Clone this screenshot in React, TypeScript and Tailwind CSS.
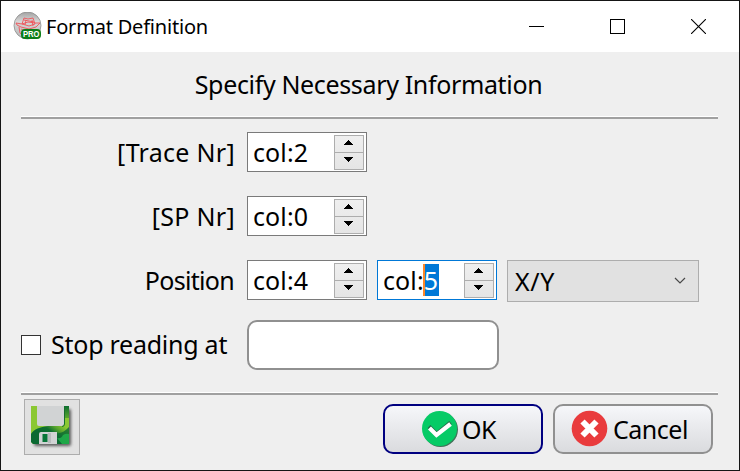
import React from "react";

function Arrow({ up }: { up?: boolean }) {
  return (
    <svg width="9" height="5" viewBox="0 0 9 5" shapeRendering="crispEdges">
      <path d={up ? "M4 0h1v1h1v1h1v1h1v1h1v1H0V4h1V3h1V2h1V1h1z" : "M0 0h9v1H8v1H7v1H6v1H5v1H4V4H3V3H2V2H1V1H0z"} fill="#000" />
    </svg>
  );
}

function SpinBox({ value, focused }: { value: string; focused?: boolean }) {
  return (
    <div className={`flex h-10 w-[120px] items-center border bg-white pr-0.5 pl-[5px] ${focused ? "border-[#0078d7]" : "border-[#7a7a7a]"}`}>
      <div className="flex h-8 flex-1 items-center leading-8">
        <span className="tracking-[0.1px]">col:</span>
        {focused ? (
          <span className="-ml-px h-8 w-4 border-l-2 border-[#ff8728] bg-[#0078d7] text-white"><span className="-ml-px">{value}</span></span>
        ) : (
          <span>{value}</span>
        )}
      </div>
      <div className="flex h-[35px] w-[30px] flex-col border border-[#adadad] bg-gradient-to-b from-[#efefef] to-[#e5e5e5]">
        <div className="flex h-[17px] items-center justify-center border-b border-[#adadad] pr-px pb-0.5"><Arrow up /></div>
        <div className="flex h-4 items-center justify-center pr-px pb-[3px]"><Arrow /></div>
      </div>
    </div>
  );
}

function AppIcon() {
  return (
    <svg width="30" height="30" viewBox="0 0 30 30">
      <defs>
        <linearGradient id="ball" x1="0" y1="0" x2="0" y2="1">
          <stop offset="0" stopColor="#a2a2a2" />
          <stop offset=".35" stopColor="#d6d6d6" />
          <stop offset="1" stopColor="#b9b9b9" />
        </linearGradient>
      </defs>
      <circle cx="14.5" cy="13.5" r="13.500" fill="url(#ball)" stroke="#8d8d8d" strokeWidth=".8" />
      <path d="M9 12l2-6 4 1 5-1 2 6M3 11l6 1 6-2 7 1 5 0-4 4-7 2-8-2-4-2zM9 12l7 2 6-2M11 8l10 2M6 15l1 6 3 3M8 17l4 2 5-1M13 8l-1 5M19 8l1 6" fill="none" stroke="#ee5459" strokeWidth=".9" />
      <rect x="8" y="17" width="20" height="10" rx="4" fill="#0c7e18" />
      <text x="10" y="25.200" textLength="16.500" lengthAdjust="spacingAndGlyphs" fontFamily="Liberation Sans, sans-serif" fontSize="8.500" fontWeight="700" fill="#fff">PRO</text>
    </svg>
  );
}

function SaveIcon() {
  return (
    <svg width="44" height="44" viewBox="0 0 44 44">
      <defs>
        <linearGradient id="edge" x1="0" y1="0" x2="0" y2="1">
          <stop offset="0" stopColor="#0d6f32" />
          <stop offset=".35" stopColor="#4b9c2d" />
          <stop offset=".65" stopColor="#7fc030" />
          <stop offset="1" stopColor="#15803a" />
        </linearGradient>
        <linearGradient id="sweep" gradientUnits="userSpaceOnUse" x1="18" y1="34" x2="30" y2="18">
          <stop offset="0" stopColor="#0b6a33" />
          <stop offset=".4" stopColor="#0f6f30" />
          <stop offset=".7" stopColor="#58a52e" />
          <stop offset="1" stopColor="#8bc832" />
        </linearGradient>
        <filter id="soft" x="-20%" y="-20%" width="150%" height="150%">
          <feGaussianBlur stdDeviation="1.500" />
        </filter>
      </defs>
      <rect x="4" y="4" width="37" height="37" rx="2" fill="#444" opacity=".85" filter="url(#soft)" />
      <path d="M1 1h38v38H3l-2-2z" fill="#8bc832" />
      <path d="M34 1h5v28h-5z" fill="url(#edge)" />
      <path d="M1 29c3-5 9-7 17-8 8 0 14-3 17-8h4v26H3l-2-2z" fill="url(#sweep)" />
      <path d="M26 28c5 1 9-2 13-6v17H26z" fill="#0b6a33" opacity=".8" />
      <path d="M33 30q3-2 6-1v10h-7l-5-6q4 1 6-3z" fill="#22b14c" opacity=".85" />
      <path d="M7 1h27v18q0 2-2 2H9q-2 0-2-2z" fill="#d1d3d4" />
      <path d="M34.500 1v18q0 2.500-2.500 2.500" fill="none" stroke="#176f2c" />
      <path d="M11 27h16v12H9V29q0-2 2-2z" fill="#d1d3d4" />
      <path d="M18 28h3v10h-3z" fill="#b9bcbd" />
      <rect x="12.500" y="29" width="5" height="8" fill="#087638" />
    </svg>
  );
}

function OkIcon() {
  return (
    <svg width="38" height="38" viewBox="0 0 38 38">
      <circle cx="19.500" cy="19.500" r="17.500" fill="#42725a" />
      <circle cx="18.500" cy="18.500" r="17.500" fill="#06cb66" />
      <path d="M8 16.500l7.500 7.500L29.500 12.500" fill="none" stroke="#236c48" strokeWidth="4" />
      <path d="M8.500 18l7 7 14-11" fill="none" stroke="#fff" strokeWidth="4.200" />
    </svg>
  );
}

function CancelIcon() {
  return (
    <svg width="38" height="38" viewBox="0 0 38 38">
      <circle cx="18.500" cy="18.500" r="17.800" fill="#e93b3d" />
      <path d="M11.500 11.500l14 14M25.500 11.500l-14 14" stroke="#fff" strokeWidth="6" />
    </svg>
  );
}

function Divider() {
  return <div className="h-[3px] border-t border-white bg-[#a0a0a0]" />;
}

export default function App() {
  return (
    <div className="flex h-[471px] w-[740px] flex-col border border-[#151515] bg-[#efefef] font-['Noto_Sans',sans-serif] text-[25px] leading-none whitespace-nowrap text-black">
      <header className="flex h-[51px] shrink-0 items-center bg-white pl-3">
        <AppIcon />
        <h1 className="ml-[3px] pt-px text-[20px] leading-8 tracking-[-0.2px]">Format Definition</h1>
        <div className="ml-auto flex gap-[66px] pr-[33px]">
          <svg width="15" height="15" shapeRendering="crispEdges"><path d="M0 7.500h15" stroke="#000" /></svg>
          <svg width="15" height="15" shapeRendering="crispEdges"><rect x=".5" y=".5" width="14" height="14" fill="none" stroke="#000" /></svg>
          <svg width="15" height="15"><path d="M0 0l15 15M15 0L0 15" stroke="#000" strokeWidth="1.100" /></svg>
        </div>
      </header>
      <main className="flex flex-col pr-[21px] pl-5">
        <h2 className="flex h-16 items-center justify-center pr-0.5 tracking-[-0.35px]">Specify Necessary Information</h2>
        <Divider />
        <div className="grid grid-cols-[216px_1fr] gap-x-2.5 gap-y-6 pt-[13px]">
          <label className="flex h-10 items-center justify-end pr-0.5 tracking-[0.3px]">[Trace Nr]</label>
          <SpinBox value="2" />
          <label className="flex h-10 items-center justify-end pr-0.5 tracking-[0.3px]">[SP Nr]</label>
          <SpinBox value="0" />
          <label className="flex h-10 items-center justify-end pr-[3px] tracking-[-0.7px]">Position</label>
          <div className="flex h-10 gap-2.5">
            <SpinBox value="4" />
            <SpinBox value="5" focused />
            <div className="flex h-[42px] w-48 items-center justify-between border border-[#adadad] bg-[#e1e1e1] pr-3 pl-[7px]">
              <span className="tracking-[0.7px]">X/Y</span>
              <svg width="12" height="8" viewBox="0 0 12 8"><path d="M1 1l5 5 5-5" fill="none" stroke="#484848" strokeWidth="1.200" /></svg>
            </div>
          </div>
        </div>
        <div className="mt-5 flex h-[50px] items-center">
          <label className="flex w-[226px] items-center">
            <span className="mr-[10px] size-5 border border-[#333] bg-white" />
            <span className="-mt-0.5 tracking-[-0.25px]">Stop reading at</span>
          </label>
          <div className="h-[50px] w-[252px] rounded-[10px] border-2 border-[#909090] bg-white" />
        </div>
        <div className="mt-[22px]"><Divider /></div>
        <footer className="mt-1 flex h-[56px] pr-[5px] pl-[3px]">
          <button className="flex size-14 items-center justify-center border border-[#adadad] bg-[#e1e1e1]"><SaveIcon /></button>
          <div className="mt-[5px] ml-auto flex h-[50px] gap-2.5">
            <button className="flex w-40 items-center gap-[3px] rounded-[10px] border-2 border-[#000080] bg-gradient-to-b from-[#f6f7fa] to-[#dadbde] pl-9"><OkIcon /><span className="tracking-[-0.6px]">OK</span></button>
            <button className="flex w-40 items-center gap-1 rounded-[10px] border-2 border-[#909090] bg-gradient-to-b from-[#f6f7fa] to-[#dadbde] pl-4"><CancelIcon /><span className="tracking-[-0.5px]">Cancel</span></button>
          </div>
        </footer>
      </main>
    </div>
  );
}
